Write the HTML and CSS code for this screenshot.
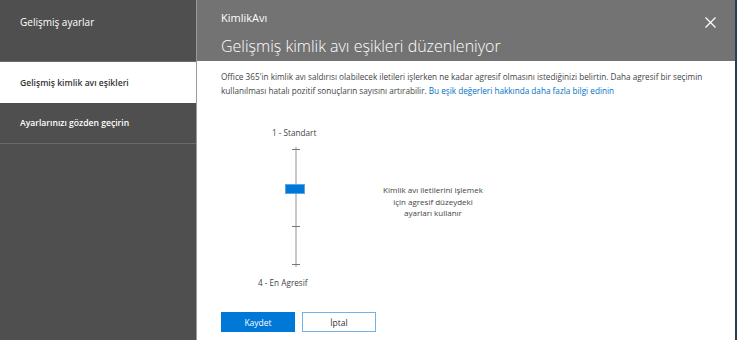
FILE: index.html
```html
<!DOCTYPE html>
<html>
<head>
    <title>KimlikAvı</title>
    <meta charset="UTF-8">
    <link rel="stylesheet" href="styles.css">
</head>
<body>
    <div class="app">
        <div class="sidebar">
            <div class="side-head">Gelişmiş ayarlar</div>
            <div class="side-item active">Gelişmiş kimlik avı eşikleri</div>
            <div class="side-item">Ayarlarınızı gözden geçirin</div>
        </div>
        <div class="main">
            <div class="header">
                <div class="header-top">
                    <span class="app-name">KimlikAvı</span>
                    <svg class="close" width="11" height="11" viewBox="0 0 11 11">
                        <path d="M0.5 0.5 L10.5 10.5 M10.5 0.5 L0.5 10.5" stroke="#fff" stroke-width="1.2" fill="none"/>
                    </svg>
                </div>
                <h1>Gelişmiş kimlik avı eşikleri düzenleniyor</h1>
            </div>
            <div class="content">
                <p class="intro">Office 365'in kimlik avı saldırısı olabilecek iletileri işlerken ne kadar agresif olmasını istediğinizi belirtin. Daha agresif bir seçimin kullanılması hatalı pozitif sonuçların sayısını artırabilir. <a href="#">Bu eşik değerleri hakkında daha fazla bilgi edinin</a></p>
                <div class="threshold">
                    <div class="slider">
                        <div class="slider-label top">1 - Standart</div>
                        <div class="track">
                            <span class="tick"></span>
                            <span class="tick"></span>
                            <span class="tick"></span>
                            <span class="tick"></span>
                            <span class="thumb"></span>
                        </div>
                        <div class="slider-label bottom">4 - En Agresif</div>
                    </div>
                    <div class="level-desc">Kimlik avı iletilerini işlemek<br>için agresif düzeydeki<br>ayarları kullanır</div>
                </div>
                <div class="buttons">
                    <button type="button" class="btn primary">Kaydet</button>
                    <button type="button" class="btn">İptal</button>
                </div>
            </div>
        </div>
    </div>
</body>
</html>
```

FILE: styles.css
```css
/* Estilos */
body {
    margin: 0;
    font-family: "Open Sans", Arial, sans-serif;
    background-color: #fff;
    overflow: hidden;
}
.app {
    display: flex;
    width: 735px;
    height: 340px;
    border-right: 2px solid #2c3d4e;
}
.sidebar {
    width: 196px;
    background-color: #4f4f4f;
    border-right: 1px solid #9a9a9a;
    color: #fff;
}
.side-head {
    height: 62px;
    box-sizing: border-box;
    padding: 15px 20px;
    font-size: 10px;
    border-bottom: 1px solid #6b6b6b;
}
.side-item {
    height: 41px;
    box-sizing: border-box;
    display: flex;
    align-items: center;
    padding-left: 20px;
    font-size: 8.6px;
    font-weight: 600;
    border-bottom: 1px solid #6b6b6b;
}
.side-item.active {
    background-color: #fff;
    color: #333;
    border-bottom: none;
}
.main {
    flex: 1;
    display: flex;
    flex-direction: column;
}
.header {
    height: 61px;
    box-sizing: border-box;
    background-color: #737373;
    color: #fff;
    padding: 7px 19px 0 24px;
}
.header-top {
    display: flex;
    justify-content: space-between;
    align-items: center;
}
.app-name {
    font-size: 11px;
}
.close {
    margin-top: 10px;
}
.header h1 {
    margin: 6px 0 0 0;
    font-size: 16px;
    font-weight: 300;
    line-height: 24px;
}
.content {
    padding: 9px 24px 0 24px;
    color: #444;
}
.intro {
    margin: 0;
    width: 490px;
    font-size: 8.2px;
    line-height: 14px;
}
.intro a {
    color: #0072c6;
    text-decoration: none;
}
.threshold {
    display: flex;
    align-items: flex-start;
    margin-top: 29px;
}
.slider {
    width: 120px;
    font-size: 8.2px;
    line-height: 12px;
}
.slider-label.top {
    margin-left: 51px;
}
.slider-label.bottom {
    margin-left: 37px;
}
.track {
    position: relative;
    width: 2px;
    height: 120px;
    margin: 8px 0 10px 74px;
    background-color: #c8c8c8;
    display: flex;
    flex-direction: column;
    justify-content: space-between;
    align-items: center;
    padding: 2px 0;
    box-sizing: border-box;
}
.tick {
    width: 8px;
    height: 1px;
    background-color: #777;
}
.thumb {
    position: absolute;
    left: -10px;
    top: 37px;
    width: 18px;
    height: 8px;
    background-color: #0078d7;
    border: 1px solid #5aa5e6;
}
.level-desc {
    width: 150px;
    margin-left: 17px;
    margin-top: 57px;
    text-align: center;
    font-size: 8px;
    line-height: 11.5px;
}
.buttons {
    display: flex;
    gap: 7px;
    margin-top: 23px;
}
.btn {
    width: 74px;
    height: 20px;
    padding: 0;
    font-family: "Open Sans", Arial, sans-serif;
    font-size: 8.5px;
    background-color: #fff;
    color: #333;
    border: 1px solid #73b1e8;
    cursor: pointer;
}
.btn.primary {
    background-color: #0078d7;
    border-color: #0078d7;
    color: #fff;
}
```
